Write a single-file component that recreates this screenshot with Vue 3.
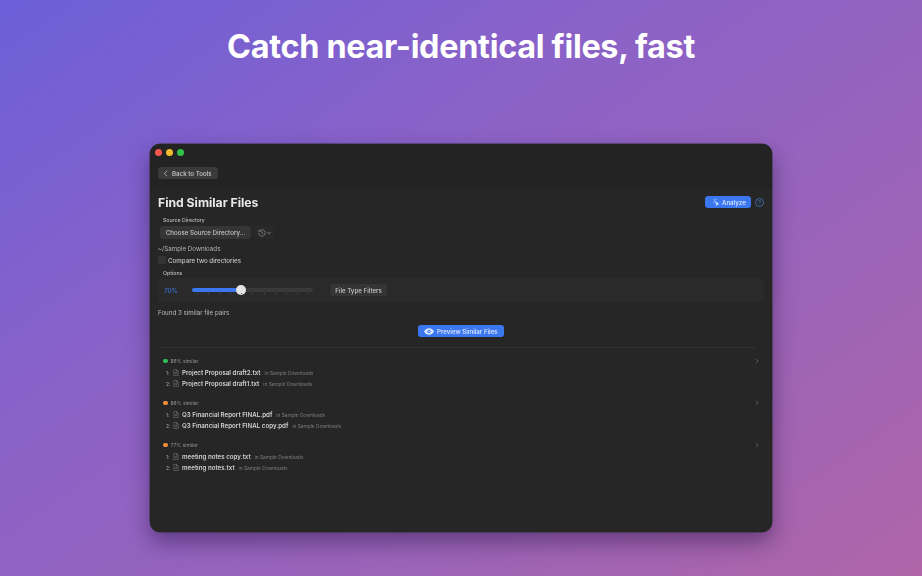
<template>
  <div class="page">
    <h1 class="headline">Catch near-identical files, fast</h1>

    <div class="window">
      <div class="titlebar">
        <span class="light red"></span>
        <span class="light yellow"></span>
        <span class="light green"></span>
      </div>

      <div class="toolbar">
        <button class="back-btn">
          <svg width="6" height="7" viewBox="0 0 6 7"><path d="M4 .8 1.4 3.5 4 6.2" fill="none" stroke="#c8c8c8" stroke-width=".8" /></svg>
          Back to Tools
        </button>
      </div>

      <div class="content">
        <div class="title-row">
          <h2>Find Similar Files</h2>
          <div class="title-actions">
            <button class="primary analyze">
              <svg width="8" height="8" viewBox="0 0 8 8"><path d="M1.5 1 3 3M4 .6v1.6M1 4h1.5M3.5 3.5 6.8 6l-1.5.2-.7 1.3z" fill="#cfe0ff" stroke="#cfe0ff" stroke-width=".6" /></svg>
              Analyze
            </button>
            <svg class="help" width="9" height="9" viewBox="0 0 9 9">
              <circle cx="4.5" cy="4.5" r="4" fill="none" stroke="#4a7fd8" stroke-width=".7" />
              <path d="M3.4 3.5c0-1.4 2.2-1.4 2.2 0 0 .8-1.1.8-1.1 1.7M4.5 6.2v.6" fill="none" stroke="#4a7fd8" stroke-width=".7" />
            </svg>
          </div>
        </div>

        <div class="section-label">Source Directory</div>
        <div class="source-row">
          <button class="gray-btn choose">Choose Source Directory...</button>
          <div class="history">
            <svg width="8" height="8" viewBox="0 0 8 8">
              <path d="M1.3 2.2A3.2 3.2 0 1 1 .8 4M1.1.9v1.5h1.5M4 2.2V4l1.2.8" fill="none" stroke="#a8a8a8" stroke-width=".6" />
            </svg>
            <svg width="4" height="4" viewBox="0 0 4 4"><path d="M.5 1.2 2 2.8l1.5-1.6" fill="none" stroke="#b0b0b0" stroke-width=".7" /></svg>
          </div>
        </div>

        <div class="path">~/Sample Downloads</div>
        <label class="compare">
          <span class="checkbox"></span>
          Compare two directories
        </label>

        <div class="section-label options-label">Options</div>
        <div class="options">
          <span class="percent">70%</span>
          <div class="slider">
            <div class="fill" :style="{ width: threshold + '%' }"></div>
            <div class="knob"></div>
            <div class="ticks"><i v-for="n in 11" :key="n"></i></div>
          </div>
          <button class="gray-btn filters">File Type Filters</button>
        </div>

        <div class="found">Found 3 similar file pairs</div>

        <div class="preview-row">
          <button class="primary preview">
            <svg width="10" height="7" viewBox="0 0 10 7">
              <path d="M0 3.5C2.5-.8 7.5-.8 10 3.5 7.5 7.8 2.5 7.8 0 3.5z" fill="#dce8ff" />
              <circle cx="5" cy="3.5" r="1.7" fill="#3b78f0" />
              <circle cx="5" cy="3.5" r=".8" fill="#dce8ff" />
            </svg>
            Preview Similar Files
          </button>
        </div>

        <div class="divider"></div>

        <div class="group" v-for="group in groups" :key="group.color + group.files[0]">
          <div class="group-head">
            <span class="dot" :class="group.color"></span>
            <span class="similar">{{ group.label }}</span>
            <svg class="chevron" width="4" height="6" viewBox="0 0 4 6"><path d="M1 .8 3 3 1 5.2" fill="none" stroke="#6a6a6a" stroke-width=".8" /></svg>
          </div>
          <div class="file" v-for="(file, i) in group.files" :key="file">
            <span class="num">{{ i + 1 }}:</span>
            <svg width="6" height="7" viewBox="0 0 6 7"><path d="M.8.4h2.8L5.2 2v4.6H.8zM3.5.5v1.6h1.6M1.8 3.4h2.4M1.8 4.6h2.4" fill="none" stroke="#858585" stroke-width=".5" /></svg>
            <span class="name">{{ file }}</span>
            <span class="where">in Sample Downloads</span>
          </div>
        </div>
      </div>
    </div>
  </div>
</template>

<script setup>
const threshold = 40

const groups = [
  { label: '86% similar', color: 'dot-green', files: ['Project Proposal draft2.txt', 'Project Proposal draft1.txt'] },
  { label: '86% similar', color: 'dot-orange', files: ['Q3 Financial Report FINAL.pdf', 'Q3 Financial Report FINAL copy.pdf'] },
  { label: '77% similar', color: 'dot-orange', files: ['meeting notes copy.txt', 'meeting notes.txt'] }
]
</script>

<style>
html,
body {
  margin: 0;
  background: #8f63bf;
}
</style>

<style scoped>
.page {
  width: 922px;
  height: 576px;
  overflow: hidden;
  display: flex;
  flex-direction: column;
  align-items: center;
  background: linear-gradient(145deg, #6c5fd8 0%, #8a62c8 35%, #9c64b8 70%, #b065a8 100%);
  font-family: Inter, "Liberation Sans", sans-serif;
}

.headline {
  margin: 26px 0 0;
  height: 118px;
  font-size: 32.4px;
  line-height: 42px;
  font-weight: 700;
  letter-spacing: -0.3px;
  color: #fff;
}

.window {
  width: 622px;
  height: 388px;
  box-sizing: border-box;
  background: #262626;
  border-radius: 10px;
  box-shadow: 0 0 0 0.5px #333136, 0 10px 22px rgba(40, 20, 70, 0.5);
  overflow: hidden;
  color: #d6d6d6;
  filter: blur(0.4px);
}

.titlebar {
  height: 16px;
  display: flex;
  align-items: center;
  gap: 4px;
  padding: 0 4.5px;
  background: #232323;
}

.light {
  width: 7px;
  height: 7px;
  border-radius: 50%;
}
.red { background: #f2564f; }
.yellow { background: #f0bb2c; }
.green { background: #30c146; }

.toolbar {
  height: 28px;
  background: #232323;
  padding: 7px 8px 0;
  box-sizing: border-box;
}

button {
  border: 0;
  padding: 0;
  font-family: inherit;
  display: flex;
  align-items: center;
}

.back-btn {
  width: 60px;
  height: 12px;
  gap: 3px;
  padding-left: 5px;
  border-radius: 3px;
  background: #3a3a3a;
  color: #cccccc;
  font-size: 6.2px;
  font-weight: 500;
}

.content {
  padding: 0 8px;
}

.title-row {
  height: 28px;
  display: flex;
  align-items: center;
  justify-content: space-between;
}

.title-row h2 {
  margin: 0;
  font-size: 12.2px;
  font-weight: 700;
  color: #e8e8e8;
}

.title-actions {
  display: flex;
  align-items: center;
  gap: 4px;
}

.primary {
  border-radius: 3px;
  background: #3b78f0;
  color: #e0eaff;
  font-weight: 500;
}

.analyze {
  width: 46px;
  height: 12px;
  gap: 2px;
  padding-left: 7px;
  font-size: 6.2px;
}

.section-label {
  margin: 0 0 2px 5px;
  height: 8px;
  line-height: 8px;
  font-size: 5.2px;
  font-weight: 500;
  color: #bdbdbd;
}

.source-row {
  display: flex;
  align-items: center;
  gap: 3px;
  margin-left: 2px;
}

.gray-btn {
  height: 13px;
  border-radius: 3px;
  background: #353535;
  color: #c6c6c6;
  font-size: 6.2px;
  font-weight: 500;
  justify-content: center;
}

.choose {
  width: 91px;
}

.history {
  width: 20px;
  height: 13px;
  display: flex;
  align-items: center;
  justify-content: center;
  gap: 1px;
  border-radius: 3px;
  background: #292929;
}

.path {
  margin-top: 5px;
  height: 10px;
  line-height: 10px;
  font-size: 6.2px;
  color: #b4b4b4;
}

.compare {
  margin-top: 1px;
  height: 10px;
  display: flex;
  align-items: center;
  gap: 2px;
  font-size: 6.2px;
  font-weight: 500;
  color: #c4c4c4;
}

.checkbox {
  width: 8px;
  height: 8px;
  border-radius: 1.5px;
  background: #353535;
}

.options-label {
  margin-top: 4px;
  margin-bottom: 1px;
}

.options {
  height: 24px;
  display: flex;
  align-items: center;
  padding-left: 6px;
  background: #2a2a2a;
  border-radius: 3px;
}

.percent {
  width: 28px;
  font-size: 6.2px;
  font-weight: 500;
  color: #3b78d8;
}

.slider {
  position: relative;
  width: 121px;
  height: 4px;
  margin-right: 17px;
  border-radius: 2px;
  background: #3a3a3a;
}

.fill {
  height: 100%;
  border-radius: 2px;
  background: #3b78f0;
}

.knob {
  position: absolute;
  left: 44px;
  top: -3px;
  width: 10px;
  height: 10px;
  border-radius: 50%;
  background: #e4e4e4;
}

.ticks {
  position: absolute;
  left: 5px;
  right: 4px;
  top: 5px;
  display: flex;
  justify-content: space-between;
}

.ticks i {
  width: 1px;
  height: 1px;
  background: #555;
}

.filters {
  width: 57px;
  height: 12px;
}

.found {
  margin-top: 6px;
  height: 10px;
  line-height: 10px;
  font-size: 6.2px;
  color: #bcbcbc;
}

.preview-row {
  display: flex;
  justify-content: center;
  margin-top: 7px;
}

.preview {
  width: 86px;
  height: 12px;
  gap: 3px;
  padding-left: 6px;
  font-size: 6.2px;
}

.divider {
  margin: 10px 8px 0 2px;
  height: 1px;
  background: #303030;
}

.group {
  margin-top: 9px;
  margin-bottom: 10px;
}

.group-head {
  height: 8px;
  display: flex;
  align-items: center;
  gap: 3px;
  padding-left: 5px;
  margin-bottom: 2px;
}

.dot {
  width: 4.5px;
  height: 4.5px;
  border-radius: 50%;
}
.dot-green { background: #30c158; }
.dot-orange { background: #f5923a; }

.similar {
  font-size: 5px;
  color: #949494;
}

.chevron {
  margin-left: auto;
  margin-right: 5px;
}

.file {
  height: 11px;
  display: flex;
  align-items: center;
  padding-left: 8px;
}

.num {
  width: 7px;
  font-size: 5px;
  color: #a0a0a0;
}

.file svg {
  margin-right: 1px;
}

.name {
  margin: 0 4px 0 2px;
  font-size: 6.2px;
  font-weight: 600;
  color: #d0d0d0;
}

.where {
  font-size: 4.8px;
  color: #7c7c7c;
}
</style>
